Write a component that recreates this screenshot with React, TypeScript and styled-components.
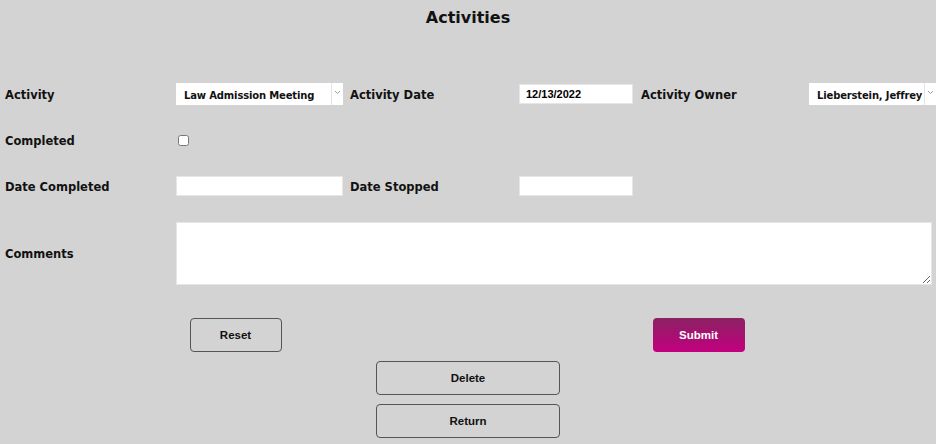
import React from "react";
import { styled, createGlobalStyle } from "styled-components";

const GlobalStyle = createGlobalStyle`
  html, body {
    margin: 0;
    padding: 0;
    background: #d3d3d3;
  }
  body {
    font-family: "DejaVu Sans", "Liberation Sans", sans-serif;
    overflow: hidden;
  }
`;

const App = () => {
  return (
    <Page>
      <GlobalStyle />
      <Title>{`Activities`}</Title>
      <FormGrid>
        <Label>{`Activity`}</Label>
        <SelectBox $width={167}>
          <SelectText>{`Law Admission Meeting`}</SelectText>
          <SelectArrow>
            <Chevron />
          </SelectArrow>
        </SelectBox>
        <Label>{`Activity Date`}</Label>
        <TextInput $width={114} defaultValue={`12/13/2022`} />
        <Label>{`Activity Owner`}</Label>
        <SelectBox $width={127}>
          <SelectText>{`Lieberstein, Jeffrey`}</SelectText>
          <SelectArrow>
            <Chevron />
          </SelectArrow>
        </SelectBox>

        <Label>{`Completed`}</Label>
        <CheckCell>
          <Check type="checkbox" />
        </CheckCell>
        <Spacer $span={4} />

        <Label>{`Date Completed`}</Label>
        <TextInput $width={167} />
        <Label>{`Date Stopped`}</Label>
        <TextInput $width={114} />
        <Spacer $span={2} />

        <Label>{`Comments`}</Label>
        <Comments />
      </FormGrid>
      <ButtonRow>
        <LeftHalf>
          <OutlineButton $width={92}>{`Reset`}</OutlineButton>
        </LeftHalf>
        <RightHalf>
          <SubmitButton>{`Submit`}</SubmitButton>
        </RightHalf>
      </ButtonRow>
      <ButtonStack>
        <OutlineButton $width={184}>{`Delete`}</OutlineButton>
        <OutlineButton $width={184}>{`Return`}</OutlineButton>
      </ButtonStack>
    </Page>
  );
};

const Chevron = () => (
  <svg width="7" height="5" viewBox="0 0 7 5">
    <path d="M1 1 L3.5 3.5 L6 1" fill="none" stroke="#a0a0a0" strokeWidth="1" />
  </svg>
);

const Page = styled.div`
  width: 936px;
  height: 444px;
  display: flex;
  flex-direction: column;
  color: #111;
`;

const Title = styled.h1`
  margin: 6px 0 0;
  height: 24px;
  text-align: center;
  font-size: 16px;
  line-height: 24px;
  font-weight: bold;
`;

const FormGrid = styled.div`
  margin-top: 53px;
  padding-left: 5px;
  display: grid;
  grid-template-columns: 171px 174px 169px 122px 168px auto;
  grid-template-rows: 22px 22px 22px 64px;
  row-gap: 24px;
  align-items: center;
`;

const Label = styled.div`
  font-size: 11.5px;
  font-weight: bold;
  white-space: nowrap;
  padding-top: 1px;
`;

const Spacer = styled.div<{ $span: number }>`
  grid-column: span ${(p) => p.$span};
`;

const SelectBox = styled.div<{ $width: number }>`
  width: ${(p) => p.$width}px;
  height: 22px;
  background: #fff;
  display: flex;
  align-items: stretch;
`;

const SelectText = styled.span`
  flex: 1;
  display: flex;
  align-items: flex-end;
  padding: 0 0 4px 8px;
  font-size: 10px;
  font-weight: bold;
  letter-spacing: -0.15px;
  white-space: nowrap;
  overflow: hidden;
`;

const SelectArrow = styled.span`
  width: 12px;
  border-left: 1px solid #e4e4e4;
  display: flex;
  justify-content: center;
  padding-top: 7px;
  box-sizing: border-box;
`;

const TextInput = styled.input<{ $width: number }>`
  width: ${(p) => p.$width}px;
  height: 20px;
  box-sizing: border-box;
  border: 1px solid #e6e6e6;
  background: #fff;
  padding: 0 6px;
  font-family: "Liberation Sans", Arial, sans-serif;
  font-size: 11px;
  font-weight: bold;
  color: #000;
  outline: none;
`;

const CheckCell = styled.div`
  display: flex;
  align-items: center;
`;

const Check = styled.input`
  margin: 0 0 0 2px;
  width: 11px;
  height: 11px;
`;

const Comments = styled.textarea`
  grid-column: 2 / span 5;
  align-self: end;
  width: 756px;
  height: 63px;
  box-sizing: border-box;
  border: 1px solid #e6e6e6;
  background: #fff;
  resize: both;
  outline: none;
`;

const ButtonRow = styled.div`
  margin-top: 33px;
  display: flex;
`;

const LeftHalf = styled.div`
  flex: 1;
  display: flex;
  justify-content: center;
  padding-left: 4px;
`;

const RightHalf = styled(LeftHalf)`
  padding-left: 0;
  padding-right: 6px;
`;

const OutlineButton = styled.button<{ $width: number }>`
  width: ${(p) => p.$width}px;
  height: 34px;
  box-sizing: border-box;
  border: 1px solid #555;
  border-radius: 4px;
  background: transparent;
  font-family: "Liberation Sans", Arial, sans-serif;
  font-size: 11.5px;
  font-weight: bold;
  color: #111;
`;

const SubmitButton = styled.button`
  width: 92px;
  height: 34px;
  border: none;
  border-radius: 4px;
  background: linear-gradient(#8b2163, #c2007f);
  font-family: "Liberation Sans", Arial, sans-serif;
  font-size: 11.5px;
  font-weight: bold;
  color: #fff;
`;

const ButtonStack = styled.div`
  margin-top: 9px;
  display: flex;
  flex-direction: column;
  align-items: center;
  gap: 9px;
`;

export default App;
